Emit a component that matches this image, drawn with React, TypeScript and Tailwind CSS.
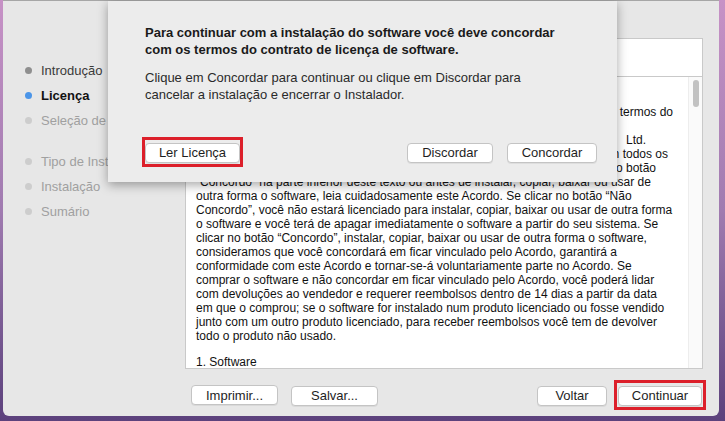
import React from 'react';

const steps = [
  { label: 'Introdução', state: 'done' },
  { label: 'Licença', state: 'current' },
  { label: 'Seleção de Destino', state: 'todo' },
];

const steps2 = ['Tipo de Instalação', 'Instalação', 'Sumário'];

// lines partly under the sheet carry a fixed width so their tail ends where the reference shows it
const licenseLines: { text: string; w?: string }[] = [
  { text: 'CONTRATO DE LICENÇA DE USUÁRIO FINAL DO SOFTWARE' },
  { text: 'IMPORTANTE – LEIA COM ATENÇÃO: Este Contrato de Licença (“Acordo”)' },
  { text: 'é um acordo legal entre você e o fornecedor, que estabelece os termos do', w: 'w-[477px]' },
  { text: 'uso do software.' },
  { text: 'Este software é fornecido e licenciado por Samsung Electronics Co.,\u2003Ltd.', w: 'w-[450px]' },
  { text: '(“Samsung”), cujos direitos de propriedade são mantidos em todos os', w: 'w-[472px]' },
  { text: 'momentos pelo fabricante. Antes de clicar no botão', w: 'w-[460px]' },
  { text: '“Concordo” na parte inferior deste texto ou antes de instalar, copiar, baixar ou usar de' },
  { text: 'outra forma o software, leia cuidadosamente este Acordo. Se clicar no botão “Não' },
  { text: 'Concordo”, você não estará licenciado para instalar, copiar, baixar ou usar de outra forma' },
  { text: 'o software e você terá de apagar imediatamente o software a partir do seu sistema. Se' },
  { text: 'clicar no botão “Concordo”, instalar, copiar, baixar ou usar de outra forma o software,' },
  { text: 'consideramos que você concordará em ficar vinculado pelo Acordo, garantirá a' },
  { text: 'conformidade com este Acordo e tornar-se-á voluntariamente parte no Acordo. Se' },
  { text: 'comprar o software e não concordar em ficar vinculado pelo Acordo, você poderá lidar' },
  { text: 'com devoluções ao vendedor e requerer reembolsos dentro de 14 dias a partir da data' },
  { text: 'em que o comprou; se o software for instalado num produto licenciado ou fosse vendido' },
  { text: 'junto com um outro produto licenciado, para receber reembolsos você tem de devolver' },
  { text: 'todo o produto não usado.' },
];

const Btn = ({ label, w }: { label: string; w: string }) => (
  <button
    className={`${w} h-[20px] bg-white border border-[#c4c4c4] rounded-[4px] text-[13px] leading-none text-[#1e1e1e] shadow-[0_1px_0_rgba(0,0,0,0.06)]`}
  >
    {label}
  </button>
);

const App: React.FC = () => {
  return (
    <div className="w-[725px] h-[421px] overflow-hidden bg-linear-to-b from-[#c792c6] via-[#a07bb0] to-[#5c417c] pl-[3px] pr-[6px] pb-[5px] font-['Liberation_Sans',Arial,sans-serif]">
      <div className="relative h-[416px] flex bg-[#e7e7e7] border-t border-[#a6a6a6] rounded-b-[6px]">
        {/* sidebar */}
        <div className="w-[182px] pt-[57px] pl-[22px] text-[13px]">
          {steps.map((s) => (
            <div key={s.label} className="h-[25px] flex items-center gap-[9px] whitespace-nowrap">
              <span
                className={`w-[7px] h-[7px] rounded-full ${
                  s.state === 'done' ? 'bg-[#8f8f8f]' : s.state === 'current' ? 'bg-[#4b95e8]' : 'bg-[#cdcdcd]'
                }`}
              />
              <span
                className={
                  s.state === 'done'
                    ? 'text-[#3a3a3a]'
                    : s.state === 'current'
                    ? 'font-bold text-[#111]'
                    : 'text-[#a0a0a0]'
                }
              >
                {s.label}
              </span>
            </div>
          ))}
          <div className="h-[16px]" />
          {steps2.map((s) => (
            <div key={s} className="h-[25px] flex items-center gap-[9px] whitespace-nowrap">
              <span className="w-[7px] h-[7px] rounded-full bg-[#cdcdcd]" />
              <span className="text-[#a0a0a0]">{s}</span>
            </div>
          ))}
        </div>

        {/* content */}
        <div className="w-[518px] pt-[37px]">
          <div className="h-[39px] bg-white border border-[#c9c9c9]" />
          <div className="h-[292px] flex bg-white border-x border-b border-[#c9c9c9] overflow-hidden">
            <div className="flex-1 pl-[10px] text-[12px] leading-[14px] text-[#111] whitespace-nowrap overflow-hidden">
              {licenseLines.map((l, i) => (
                <div key={i} className={l.w ? `${l.w} text-right` : ''}>
                  {l.text}
                </div>
              ))}
              <div className="h-[12px]" />
              <div>1. Software</div>
            </div>
            <div className="w-[14px] bg-[#fafafa] border-l border-[#ededed] pt-[3px] flex justify-center">
              <div className="w-[6px] h-[27px] rounded-full bg-[#c2c2c2]" />
            </div>
          </div>
          <div className="mt-[14px] flex items-center pl-[6px] pr-[1px]">
            <Btn label="Imprimir..." w="w-[87px]" />
            <div className="ml-[13px]">
              <Btn label="Salvar..." w="w-[87px]" />
            </div>
            <div className="ml-auto">
              <Btn label="Voltar" w="w-[70px]" />
            </div>
            <div className="relative ml-[11px]">
              <Btn label="Continuar" w="w-[84px]" />
              <div className="absolute -left-[4px] -right-[4px] -top-[3px] -bottom-[3px] border-[3px] border-[#dc1f2a]" />
            </div>
          </div>
        </div>

        {/* sheet */}
        <div className="absolute left-[105px] top-0 w-[509px] h-[181px] bg-[#ececec] shadow-[0_3px_10px_rgba(0,0,0,0.35)] pt-[23px] pl-[37px] pr-[20px]">
          <div className="text-[13px] leading-[17px] font-bold text-[#1a1a1a]">
            <div>Para continuar com a instalação do software você deve concordar</div>
            <div>com os termos do contrato de licença de software.</div>
          </div>
          <div className="mt-[11px] text-[13px] leading-[17px] text-[#2a2a2a]">
            <div>Clique em Concordar para continuar ou clique em Discordar para</div>
            <div>cancelar a instalação e encerrar o Instalador.</div>
          </div>
          <div className="mt-[37px] flex items-center">
            <div className="relative">
              <Btn label="Ler Licença" w="w-[95px]" />
              <div className="absolute -left-[3px] -right-[3px] -top-[3px] -bottom-[3px] border-[3px] border-[#dc1f2a]" />
            </div>
            <div className="ml-auto">
              <Btn label="Discordar" w="w-[86px]" />
            </div>
            <div className="ml-[14px]">
              <Btn label="Concordar" w="w-[90px]" />
            </div>
          </div>
        </div>
      </div>
    </div>
  );
};

export default App;
